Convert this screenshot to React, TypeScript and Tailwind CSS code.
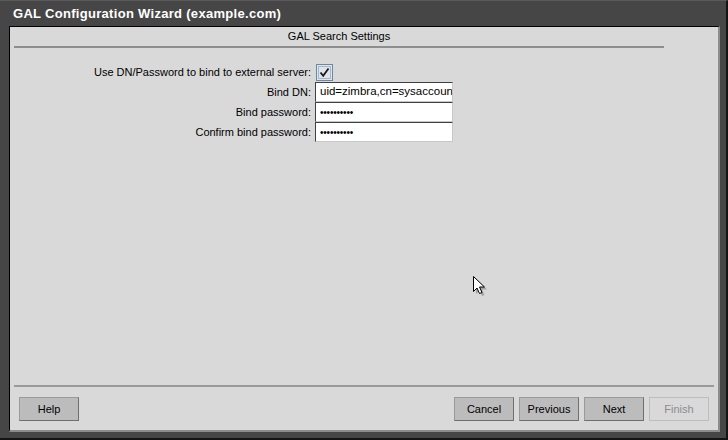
import React from "react";

const font = { fontFamily: '"Liberation Sans", Arial, sans-serif' };

function Btn({ label, disabled }: { label: string; disabled?: boolean }) {
  return (
    <div
      className={
        "w-[60px] h-[24px] flex items-center justify-center text-[11px] border " +
        (disabled
          ? "bg-[#d9d9d9] border-[#bdbdbd] text-[#8c8c8c]"
          : "bg-[#bcbcbc] border-t-[#9a9a9a] border-l-[#9a9a9a] border-r-[#6f6f6f] border-b-[#6f6f6f] text-black")
      }
    >
      {label}
    </div>
  );
}

const inputCls =
  "h-[20px] w-[138px] bg-white border border-t-[#404040] border-l-[#404040] border-r-[#c8c8c8] border-b-[#c8c8c8] overflow-hidden whitespace-nowrap flex items-center pl-[4px]";

export default function App() {
  return (
    <div style={font} className="relative w-[728px] h-[440px] bg-[#464646] border-t border-t-[#5a5a5a] border-r-2 border-r-[#141414] border-b-2 border-b-[#141414] flex flex-col">
      <div className="h-[25px] pl-[13px] flex items-center text-white font-bold text-[13px] tracking-[0.3px]">
        GAL Configuration Wizard (example.com)
      </div>
      <div className="ml-[9px] mr-[6px] mb-[6px] flex-1 flex flex-col bg-[#d9d9d9] border-t border-l border-t-black border-l-black border-r-2 border-b-2 border-r-[#8c8c8c] border-b-[#8c8c8c]">
        <div className="ml-[4px] w-[650px] h-[21px] border-b-2 border-b-[#8e8e8e] flex items-center justify-center text-[11px] text-black">
          GAL Search Settings
        </div>
        <div className="mt-[14px] grid grid-cols-[301px_1fr] gap-x-[4px] text-[11px] text-black">
          <div className="h-[20px] flex items-center justify-end">Use DN/Password to bind to external server:</div>
          <div className="h-[20px] flex items-center pl-[1px]">
            <div className="w-[17px] h-[17px] border border-[#6a88a8] bg-[#dfe4ea] flex items-center justify-center">
              <div className="w-[13px] h-[13px] border border-[#a8b8c8] flex items-center justify-center">
                <svg width="11" height="11" viewBox="0 0 11 11">
                  <path d="M1.5 5.5 L4.2 8.8 L9.5 1.5" fill="none" stroke="#1a1a1a" strokeWidth="1.8" />
                </svg>
              </div>
            </div>
          </div>
          <div className="h-[20px] flex items-center justify-end">Bind DN:</div>
          <div className={inputCls + " text-[11.5px]"}>uid=zimbra,cn=sysaccounts,cn=admins,cn=zimbra</div>
          <div className="h-[20px] flex items-center justify-end">Bind password:</div>
          <div className={inputCls + " text-[10px] tracking-[-0.2px]"}>••••••••••</div>
          <div className="h-[20px] flex items-center justify-end">Confirm bind password:</div>
          <div className={inputCls + " text-[10px] tracking-[-0.2px]"}>••••••••••</div>
        </div>
        <div className="flex-1" />
        <div className="ml-[4px] mr-[4px] border-b-2 border-b-[#9a9a9a]" />
        <div className="h-[43px] flex items-start pt-[10px] pl-[9px] pr-[9px] gap-[5px]">
          <Btn label="Help" />
          <div className="flex-1" />
          <Btn label="Cancel" />
          <Btn label="Previous" />
          <Btn label="Next" />
          <Btn label="Finish" disabled />
        </div>
      </div>
      <svg className="absolute left-[472px] top-[274px]" width="16" height="22" viewBox="0 0 16 22">
        <path d="M2.5 2.5 L2.5 17.5 L6 14 L8.5 19.5 L11 18.5 L8.5 13 L13.5 13 Z" fill="#000" opacity="0.25" transform="translate(1.5 1.5)" />
        <path d="M1.5 1.5 L1.5 16.5 L5 13 L7.5 18.5 L10 17.5 L7.5 12 L12.5 12 Z" fill="#fff" stroke="#000" strokeWidth="1" />
      </svg>
    </div>
  );
}
